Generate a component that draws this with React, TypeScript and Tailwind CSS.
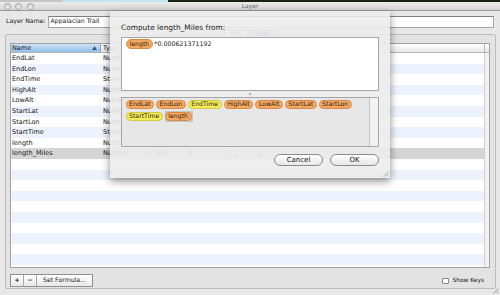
import React from 'react';

type Field = { name: string; type: string };

const fields: Field[] = [
  { name: 'EndLat', type: 'Number' },
  { name: 'EndLon', type: 'Number' },
  { name: 'EndTime', type: 'String' },
  { name: 'HighAlt', type: 'Number' },
  { name: 'LowAlt', type: 'Number' },
  { name: 'StartLat', type: 'Number' },
  { name: 'StartLon', type: 'Number' },
  { name: 'StartTime', type: 'String' },
  { name: 'length', type: 'Number' },
  { name: 'length_Miles', type: 'Number' },
];

const ROWS = 21;

const Chip = ({ label, yellow }: { label: string; yellow?: boolean }) => (
  <span
    className={`inline-flex items-center h-[9.5px] px-[2.5px] rounded-full border text-[6.2px] leading-none text-[#2b1d10] ${
      yellow ? 'bg-[#f3ec5a] border-[#d4c93e]' : 'bg-[#f6a862] border-[#d98a46]'
    }`}
  >
    {label}
  </span>
);

const Grip = () => (
  <svg width="7" height="7" viewBox="0 0 7 7">
    <path d="M6.5 1 L1 6.5 M6.5 3 L3 6.5 M6.5 5 L5 6.5" stroke="#9a9a9a" strokeWidth="0.7" />
  </svg>
);

export default function App() {
  return (
    <div className="relative w-[500px] h-[295px] overflow-hidden bg-[#e8e8e8] font-['DejaVu_Sans',sans-serif] text-[#151515] flex flex-col">
      {/* desktop strip */}
      <div className="h-[2px] flex shrink-0">
        <div className="w-[63px] bg-[#c4c4c4]" />
        <div className="w-[105px] bg-[#c2e5f0]" />
        <div className="flex-1 bg-[#16220f]" />
      </div>

      {/* title bar */}
      <div className="h-[9px] shrink-0 grid grid-cols-[1fr_auto_1fr] items-center bg-gradient-to-b from-[#ececec] to-[#d5d5d5] border-b border-[#9a9a9a]">
        <div className="flex items-center gap-[4.5px] pl-[3.5px]">
          <span className="w-[7px] h-[7px] rounded-full border border-[#a2a2a2] bg-gradient-to-b from-[#d4d4d4] to-[#f2f2f2]" />
          <span className="w-[7px] h-[7px] rounded-full border border-[#a2a2a2] bg-gradient-to-b from-[#d4d4d4] to-[#f2f2f2]" />
          <span className="w-[7px] h-[7px] rounded-full border border-[#a2a2a2] bg-gradient-to-b from-[#d4d4d4] to-[#f2f2f2]" />
        </div>
        <span className="text-[6px] leading-none text-[#6a6a6a]">Layer</span>
        <div />
      </div>

      {/* window content */}
      <div className="flex-1 flex flex-col">
        <div className="mt-[4.5px] h-[12px] flex items-center px-[6px]">
          <span className="w-[42px] text-[6.2px] leading-none">Layer Name:</span>
          <div className="flex-1 h-full bg-white border border-[#a4a4a4] border-t-[#7f7f7f] flex items-center pl-[1.5px] text-[6.2px] leading-none">
            Appalacian Trail
          </div>
        </div>

        <div className="mt-[2.5px] ml-[5px] mr-[4px] flex flex-col">
          {/* tabs */}
          <div className="self-center relative z-10 -mb-[4px] h-[8px] flex text-[5.5px] leading-none rounded-[2px] border border-[#9e9e9e] overflow-hidden">
            <span className="w-[23px] flex items-center justify-center bg-gradient-to-b from-white to-[#e4e4e4] border-r border-[#9e9e9e]">Info</span>
            <span className="w-[29px] flex items-center justify-center bg-gradient-to-b from-[#c9dff6] to-[#8ebbe8]">Fields</span>
          </div>

          <div className="h-[255px] border border-[#bdbdbd] rounded-[2px] bg-[#e3e3e3] pt-[8px] pl-[4px] pr-[5px] flex flex-col">
            {/* table */}
            <div className="h-[224.5px] border border-[#a3a3a3] bg-white flex flex-col overflow-hidden">
              <div className="h-[9px] shrink-0 flex border-b border-[#b5b5b5] bg-gradient-to-b from-white to-[#e9e9e9] text-[6.5px] leading-none">
                <div className="w-[90px] flex items-center justify-between pl-[1px] pr-[3px] bg-gradient-to-b from-[#cfe3f8] to-[#92bfeb] border-r border-[#8aa6c4]">
                  <span>Name</span>
                  <svg width="5" height="4" viewBox="0 0 5 4">
                    <path d="M2.5 0 L5 4 L0 4 Z" fill="#3e5776" />
                  </svg>
                </div>
                <div className="w-[44px] flex items-center pl-[2px] border-r border-[#c8c8c8]">Type</div>
                <div className="flex-1" />
                <div className="w-[5px] border-l border-[#b5b5b5]" />
              </div>
              <div className="flex-1 flex overflow-hidden">
                <div className="flex-1 flex flex-col">
                  {Array.from({ length: ROWS }).map((_, i) => {
                    const f = fields[i];
                    const bg = i === 9 ? 'bg-[#d5d5d5]' : i % 2 === 0 ? 'bg-white' : 'bg-[#edf3fe]';
                    return (
                      <div key={i} className={`h-[10.6px] shrink-0 flex items-center text-[6.5px] leading-none ${bg}`}>
                        <span className="w-[90px] pl-[1px]">{f?.name}</span>
                        <span className="w-[44px] pl-[2px]">{f?.type}</span>
                        {i === 9 && (
                          <>
                            <span className="w-[7px] text-right">1</span>
                            <span className="w-[19px] pl-[4px]">32</span>
                            <span className="w-[36px] pl-[17px]">0</span>
                            <span className="ml-[22px] w-[7px] h-[7px] border border-[#8f8f8f] bg-white rounded-[1px]" />
                            <svg className="ml-[21px]" width="5" height="7" viewBox="0 0 5 7">
                              <path d="M1.2 3 V2 a1.3 1.3 0 0 1 2.6 0 V3" stroke="#777" strokeWidth="0.7" fill="none" />
                              <rect x="0.5" y="3" width="4" height="3.5" fill="#888" />
                            </svg>
                          </>
                        )}
                      </div>
                    );
                  })}
                </div>
                <div className="w-[5px] bg-[#f2f2f2] border-l border-[#d0d0d0]" />
              </div>
            </div>

            {/* bottom bar */}
            <div className="mt-[6.5px] h-[13px] flex items-center justify-between pr-[6px]">
              <div className="h-full flex border border-[#909090] bg-gradient-to-b from-white to-[#e8e8e8] text-[6.2px] leading-none">
                <span className="w-[13px] flex items-center justify-center border-r border-[#a8a8a8] font-bold">+</span>
                <span className="w-[13px] flex items-center justify-center border-r border-[#a8a8a8] font-bold">−</span>
                <span className="w-[55px] flex items-center justify-center">Set Formula...</span>
              </div>
              <label className="flex items-center gap-[3.5px] text-[5.9px] leading-none mt-[1px]">
                <span className="w-[6.5px] h-[6.5px] border border-[#8a8a8a] bg-white rounded-[1px]" />
                Show Keys
              </label>
            </div>
          </div>
        </div>
      </div>

      {/* window resize grip */}
      <div className="absolute right-[1px] bottom-[1px]">
        <Grip />
      </div>

      {/* formula sheet */}
      <div className="absolute z-20 left-[110px] top-[11px] w-[280px] h-[167px] bg-[#ececec]/90 shadow-[0_3px_8px_rgba(0,0,0,0.45)] pl-[11px] pt-[12px] flex flex-col">
        <div className="h-[10px] flex items-center text-[7.4px] leading-none text-[#1e1e1e]">Compute length_Miles from:</div>
        <div className="mt-[4px] w-[258px] h-[54px] bg-white border border-[#a6a6a6] pt-[1px] pl-[4px] flex items-start">
          <Chip label="length" />
          <span className="ml-[1.5px] mt-[1.8px] text-[6.3px] leading-none">*0.000621371192</span>
        </div>
        <div className="w-[258px] h-[6px] flex items-center justify-center">
          <span className="w-[2px] h-[2px] rounded-full bg-[#9c9c9c]" />
        </div>
        <div className="w-[258px] h-[50px] bg-[#e7e7e7] border border-[#a6a6a6] flex">
          <div className="flex-1 flex flex-wrap content-start gap-x-[2px] gap-y-[2.5px] pl-[3.5px] pt-[1.5px]">
            <Chip label="EndLat" />
            <Chip label="EndLon" />
            <Chip label="EndTime" yellow />
            <Chip label="HighAlt" />
            <Chip label="LowAlt" />
            <Chip label="StartLat" />
            <Chip label="StartLon" />
            <Chip label="StartTime" yellow />
            <span className="-my-[1px] py-[1px] pr-[1.5px] bg-[#c6c6c6] flex">
              <Chip label="length" />
            </span>
          </div>
          <div className="w-[9px] bg-[#f3f3f3] border-l border-[#c4c4c4]" />
        </div>
        <div className="mt-[7px] w-[258px] h-[12px] flex justify-end gap-[7px]">
          <button className="w-[49px] h-full rounded-full border border-[#8c8c8c] bg-gradient-to-b from-white to-[#e6e6e6] text-[7px] leading-none text-[#151515]">
            Cancel
          </button>
          <button className="w-[49px] h-full rounded-full border border-[#8c8c8c] bg-gradient-to-b from-white to-[#e6e6e6] text-[7px] leading-none text-[#151515]">
            OK
          </button>
        </div>
        <div className="absolute right-[1px] bottom-[1px]">
          <Grip />
        </div>
      </div>
    </div>
  );
}
